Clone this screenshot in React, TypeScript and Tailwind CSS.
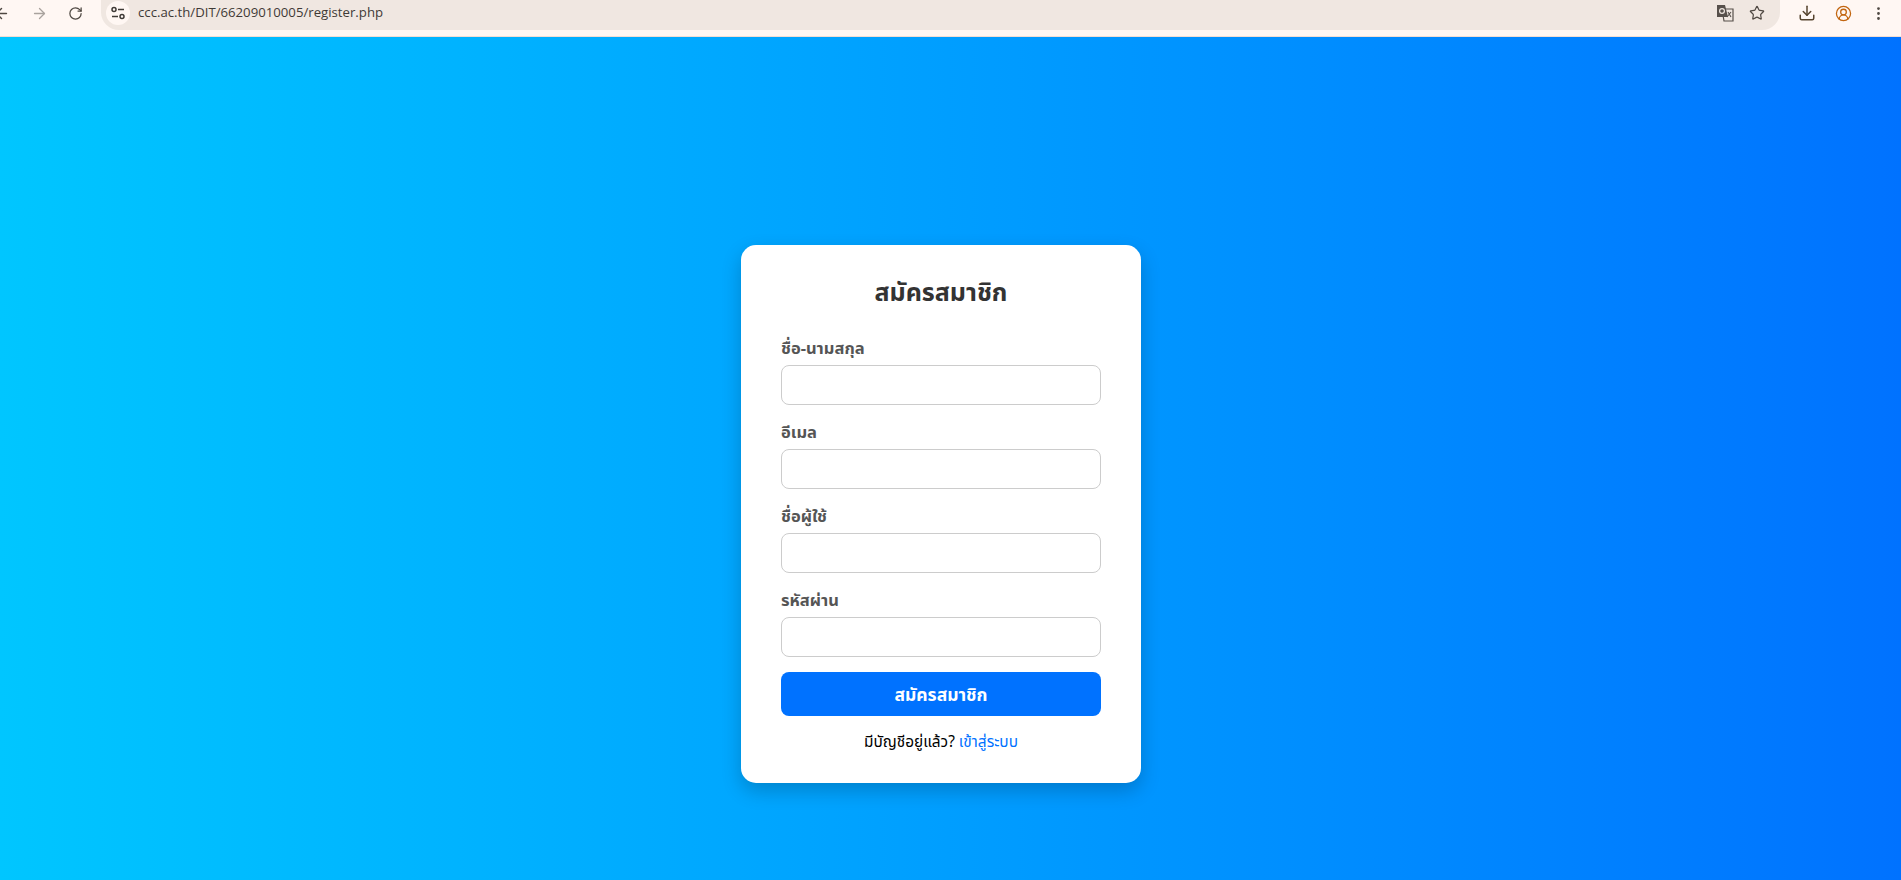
import { ArrowLeft, ArrowRight, RotateCw, Star, Download, CircleUserRound, EllipsisVertical } from 'lucide-react'

const fields = ['ชื่อ-นามสกุล', 'อีเมล', 'ชื่อผู้ใช้', 'รหัสผ่าน']

function TuneIcon() {
  return (
    <svg width="16" height="16" viewBox="0 0 16 16" fill="none" stroke="#3f3a36" strokeWidth="1.5">
      <circle cx="4" cy="4.5" r="2" />
      <path d="M8 4.5h6" />
      <path d="M2 11.5h6" />
      <circle cx="12" cy="11.5" r="2" />
    </svg>
  )
}

function TranslateIcon() {
  return (
    <svg width="18" height="18" viewBox="0 0 18 18">
      <path d="M6 5h11v12H8z" fill="none" stroke="#57504b" strokeWidth="1.2" />
      <path d="M1 1h8l3 12H1z" fill="#57504b" />
      <circle cx="6" cy="7" r="2.4" fill="none" stroke="#f0e7e1" strokeWidth="1.2" />
      <path d="M12 8l3 5M15 8l-4 5" stroke="#57504b" strokeWidth="1.1" fill="none" />
    </svg>
  )
}

function BrowserBar() {
  return (
    <div className="flex h-[37px] shrink-0 items-start border-b border-[#f3ddd2] bg-[#fff7f3] font-['Roboto',sans-serif]">
      <div className="flex h-[26px] w-[101px] shrink-0 items-center text-[#4f4842]">
        <ArrowLeft size={17} strokeWidth={2} className="ml-[-7px]" />
        <ArrowRight size={17} strokeWidth={1.8} className="ml-[21px] text-[#a9a29d]" />
        <RotateCw size={15} strokeWidth={2} className="ml-[20px]" />
      </div>
      <div className="flex h-[30px] w-[1679px] shrink-0 items-center rounded-b-[18px] bg-[#f0e7e1] pr-[15px]">
        <div className="ml-[5px] flex h-[24px] w-[24px] -translate-y-[2px] items-center justify-center rounded-full bg-[#fff7f3]">
          <TuneIcon />
        </div>
        <span className="ml-[8px] -translate-y-[2px] font-['Open_Sans',sans-serif] text-[13.2px] text-[#3f3a36]">
          ccc.ac.th/DIT/66209010005/register.php
        </span>
        <div className="ml-auto flex -translate-y-[2px] items-center gap-[15px] text-[#4f4842]">
          <TranslateIcon />
          <Star size={16} strokeWidth={1.8} />
        </div>
      </div>
      <div className="flex h-[26px] flex-1 items-center pl-[18px] text-[#57452f]">
        <Download size={18} strokeWidth={2} />
        <CircleUserRound size={17} strokeWidth={1.8} className="ml-[19px] text-[#c2650f]" />
        <EllipsisVertical size={17} strokeWidth={2} className="ml-[18px] text-[#4f4842]" />
      </div>
    </div>
  )
}

function Field({ label }: { label: string }) {
  return (
    <div>
      <label className="mb-[5px] block text-[16.5px] leading-[24px] font-bold text-[#555]">{label}</label>
      <input type="text" className="block h-[40px] w-full rounded-[8px] border border-[#ccc] bg-white px-[10px] outline-none" />
    </div>
  )
}

export default function App() {
  return (
    <div className="flex h-[880px] flex-col overflow-hidden bg-gradient-to-r from-[#00c6ff] to-[#0072ff] font-['Noto_Sans','Noto_Sans_Thai',sans-serif]">
      <BrowserBar />
      <div className="flex justify-center pt-[208px] pr-[19px]">
        <div className="w-[400px] rounded-[15px] bg-white px-[40px] pt-[28px] pb-[30px] shadow-[0_8px_20px_rgba(0,0,0,0.2)]">
          <h2 className="mb-[27px] text-center text-[25px] leading-[36px] font-bold text-[#333]">สมัครสมาชิก</h2>
          <div className="flex flex-col gap-[15px]">
            {fields.map((f) => (
              <Field key={f} label={f} />
            ))}
          </div>
          <button type="button" className="mt-[15px] block h-[44px] w-full rounded-[8px] bg-[#0072ff] text-[17.5px] font-bold text-white">
            สมัครสมาชิก
          </button>
          <p className="mt-[15px] text-center text-[15.4px] leading-[22px] text-black">
            มีบัญชีอยู่แล้ว? <a href="#" className="text-[#0072ff]">เข้าสู่ระบบ</a>
          </p>
        </div>
      </div>
    </div>
  )
}
